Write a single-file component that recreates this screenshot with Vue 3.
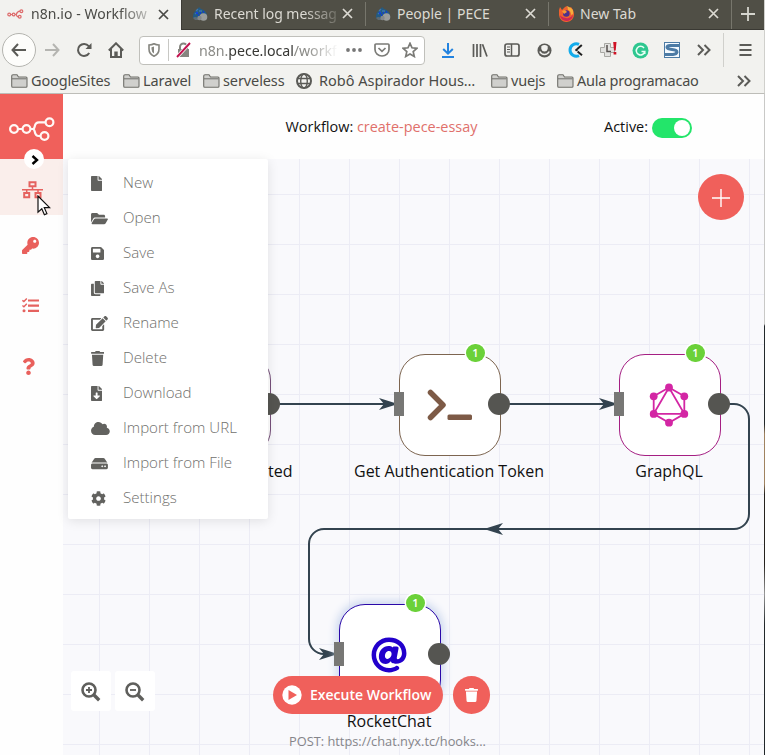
<script setup>
const tabs = [
  { title: 'Recent log messag', icon: 'drupal', cls: 'faded' },
  { title: 'People | PECE', icon: 'drupal', cls: '' },
  { title: 'New Tab', icon: 'fox', cls: '' },
]

const bookmarks = [
  { label: 'GoogleSites', cls: 'b1' },
  { label: 'Laravel', cls: 'b2' },
  { label: 'serveless', cls: 'b3' },
  { label: 'Robô Aspirador Hous…', cls: 'b4', globe: true },
  { label: 'vuejs', cls: 'b5' },
  { label: 'Aula programacao', cls: 'b6' },
]

const trash = 'M432 32H312l-9.4-18.7A24 24 0 0 0 281.1 0H166.8a23.72 23.72 0 0 0-21.4 13.3L136 32H16A16 16 0 0 0 0 48v32a16 16 0 0 0 16 16h416a16 16 0 0 0 16-16V48a16 16 0 0 0-16-16zM53.2 467a48 48 0 0 0 47.9 45h245.8a48 48 0 0 0 47.9-45L416 128H32z'

const menu = [
  { label: 'New', w: 384, d: 'M224 136V0H24C10.7 0 0 10.7 0 24v464c0 13.3 10.7 24 24 24h336c13.3 0 24-10.7 24-24V160H248c-13.2 0-24-10.8-24-24zm160-14.1v6.1H256V0h6.1c6.4 0 12.5 2.5 17 7l97.9 98c4.5 4.5 7 10.6 7 16.9z' },
  { label: 'Open', w: 576, d: 'M572.694 292.093L500.27 416.248A63.997 63.997 0 0 1 444.989 448H45.025c-18.523 0-30.064-20.093-20.731-36.093l72.424-124.155A64 64 0 0 1 152 256h399.964c18.523 0 30.064 20.093 20.73 36.093zM152 224h328v-48c0-26.51-21.49-48-48-48H272l-64-64H48C21.49 64 0 85.49 0 112v278.046l69.077-118.418C86.214 242.25 117.989 224 152 224z' },
  { label: 'Save', w: 448, d: 'M433.941 129.941l-83.882-83.882A48 48 0 0 0 316.118 32H48C21.49 32 0 53.49 0 80v352c0 26.51 21.49 48 48 48h352c26.51 0 48-21.49 48-48V163.882a48 48 0 0 0-14.059-33.941zM224 416c-35.346 0-64-28.654-64-64 0-35.346 28.654-64 64-64s64 28.654 64 64c0 35.346-28.654 64-64 64zm96-304.52V212c0 6.627-5.373 12-12 12H76c-6.627 0-12-5.373-12-12V108c0-6.627 5.373-12 12-12h228.52c3.183 0 6.235 1.264 8.485 3.515l3.48 3.48A11.996 11.996 0 0 1 320 111.48z' },
  { label: 'Save As', w: 448, d: 'M320 448v40c0 13.255-10.745 24-24 24H24c-13.255 0-24-10.745-24-24V120c0-13.255 10.745-24 24-24h72v296c0 30.879 25.121 56 56 56h168zm0-344V0H152c-13.255 0-24 10.745-24 24v368c0 13.255 10.745 24 24 24h272c13.255 0 24-10.745 24-24V128H344c-13.2 0-24-10.8-24-24zm120.971-31.029L375.029 7.029A24 24 0 0 0 358.059 0H352v96h96v-6.059a24 24 0 0 0-7.029-16.97z' },
  { label: 'Rename', w: 576, d: 'M402.6 83.2l90.2 90.2c3.8 3.8 3.8 10 0 13.8L274.4 405.6l-92.8 10.3c-12.4 1.4-22.9-9.1-21.5-21.5l10.3-92.8L388.8 83.2c3.8-3.8 10-3.8 13.8 0zm162-22.9l-48.8-48.8c-15.2-15.2-39.9-15.2-55.2 0l-35.4 35.4c-3.8 3.8-3.8 10 0 13.8l90.2 90.2c3.8 3.8 10 3.8 13.8 0l35.4-35.4c15.2-15.3 15.2-40 0-55.2zM384 346.2V448H64V128h229.8c3.2 0 6.2-1.3 8.5-3.5l40-40c7.6-7.6 2.2-20.5-8.5-20.5H48C21.5 64 0 85.5 0 112v352c0 26.5 21.5 48 48 48h352c26.5 0 48-21.5 48-48V306.2c0-10.7-12.9-16-20.5-8.5l-40 40c-2.2 2.3-3.5 5.3-3.5 8.5z' },
  { label: 'Delete', w: 448, d: trash },
  { label: 'Download', w: 384, d: 'M224 136V0H24C10.7 0 0 10.7 0 24v464c0 13.3 10.7 24 24 24h336c13.3 0 24-10.7 24-24V160H248c-13.2 0-24-10.8-24-24zm76.45 211.36l-96.42 95.7c-6.65 6.61-17.39 6.61-24.04 0l-96.42-95.7C73.42 337.29 80.54 320 94.82 320H160v-80c0-8.84 7.16-16 16-16h32c8.84 0 16 7.16 16 16v80h65.18c14.28 0 21.4 17.29 11.27 27.36zM377 105L279.1 7c-4.5-4.5-10.6-7-17-7H256v128h128v-6.1c0-6.3-2.5-12.4-7-16.9z' },
  { label: 'Import from URL', w: 640, d: 'M537.6 226.6c4.1-10.7 6.4-22.4 6.4-34.6 0-53-43-96-96-96-19.7 0-38.1 6-53.3 16.2C367 64.2 315.3 32 256 32c-88.4 0-160 71.6-160 160 0 2.7.1 5.4.2 8.1C40.2 219.8 0 273.2 0 336c0 79.5 64.5 144 144 144h368c70.7 0 128-57.3 128-128 0-61.9-44-113.6-102.4-125.4z' },
  { label: 'Import from File', w: 576, d: 'M576 304v96c0 26.51-21.49 48-48 48H48c-26.51 0-48-21.49-48-48v-96c0-26.51 21.49-48 48-48h480c26.51 0 48 21.49 48 48zm-48-80a79.557 79.557 0 0 1 30.777 6.165L462.25 85.374A48.003 48.003 0 0 0 422.311 64H153.689a48 48 0 0 0-39.938 21.374L17.223 230.165A79.557 79.557 0 0 1 48 224h480zm-48 96c-17.673 0-32 14.327-32 32s14.327 32 32 32 32-14.327 32-32-14.327-32-32-32zm-96 0c-17.673 0-32 14.327-32 32s14.327 32 32 32 32-14.327 32-32-14.327-32-32-32z' },
  { label: 'Settings', w: 512, d: 'M487.4 315.7l-42.6-24.6c4.3-23.2 4.3-47 0-70.2l42.6-24.6c4.9-2.8 7.1-8.6 5.5-14-11.1-35.6-30-67.8-54.7-94.6-3.8-4.1-10-5.1-14.8-2.3L380.8 110c-17.9-15.4-38.5-27.3-60.8-35.1V25.8c0-5.6-3.9-10.5-9.4-11.7-36.7-8.2-74.3-7.8-109.2 0-5.5 1.2-9.4 6.1-9.4 11.7V75c-22.2 7.9-42.8 19.8-60.8 35.1L88.7 85.5c-4.9-2.8-11-1.9-14.8 2.3-24.7 26.7-43.6 58.9-54.7 94.6-1.7 5.4.6 11.2 5.5 14L67.3 221c-4.3 23.2-4.3 47 0 70.2l-42.6 24.6c-4.9 2.8-7.1 8.6-5.5 14 11.1 35.6 30 67.8 54.7 94.6 3.8 4.1 10 5.1 14.8 2.3l42.6-24.6c17.9 15.4 38.5 27.3 60.8 35.1v49.2c0 5.6 3.9 10.5 9.4 11.7 36.7 8.2 74.3 7.8 109.2 0 5.5-1.2 9.4-6.1 9.4-11.7v-49.2c22.2-7.9 42.8-19.8 60.8-35.1l42.6 24.6c4.9 2.8 11 1.9 14.8-2.3 24.7-26.7 43.6-58.9 54.7-94.6 1.5-5.5-.7-11.3-5.6-14.1zM256 336c-44.1 0-80-35.9-80-80s35.9-80 80-80 80 35.9 80 80-35.9 80-80 80z' },
]

// Node positions are relative to the canvas origin.
const nodes = [
  { id: 'auth', x: 336, y: 195, label: 'Get Authentication Token' },
  { id: 'graphql', x: 556, y: 195, label: 'GraphQL' },
  { id: 'rocket', x: 276, y: 445, label: 'RocketChat', sub: 'POST: https://chat.nyx.tc/hooks...' },
]
</script>

<template>
  <div class="window">
    <header class="chrome">
      <div class="tabs">
        <div class="tab active">
          <svg class="fav" width="17" height="10" viewBox="0 0 17 10" fill="none" stroke="#dd6b6b" stroke-width="1.2">
            <circle cx="2.2" cy="5.5" r="1.4" /><circle cx="6.6" cy="5.5" r="1.4" /><circle cx="14.4" cy="2.2" r="1.4" /><circle cx="12.7" cy="7.8" r="1.4" />
            <path d="M3.6 5.5h1.6M8 5.5h1.2q1.2-3.3 3.8-3.3M9.2 5.5q.7 2.3 2.1 2.3" />
          </svg>
          <span class="title t1">n8n.io - Workflow</span>
          <svg class="close" width="11" height="11" viewBox="0 0 11 11"><path d="M1 1l9 9M10 1l-9 9" /></svg>
        </div>
        <div v-for="t in tabs" :key="t.title" class="tab">
          <svg v-if="t.icon === 'drupal'" class="fav drop" width="16" height="16" viewBox="0 0 16 16">
            <path d="M1 12Q.5 6 5 4l2-3 2 2q5 1 6 6l-2 4H4z" fill="#245b83" />
            <path d="M4 5l2-2M3 8l3-2M7 5h3" stroke="#3c76ae" stroke-width="1.3" />
            <path d="M4 7h2M8 7h1M6 9h1M11 6h1" stroke="#0b33ef" stroke-width="1.6" />
            <path d="M1 12q2-2 5 0l1 2H3z" fill="#5e6b74" />
            <circle cx="11.5" cy="11" r="3.8" fill="#9a9d9c" /><circle cx="7.5" cy="12" r="2.2" fill="#85898a" />
          </svg>
          <svg v-else class="fav" width="17" height="17" viewBox="0 0 17 17">
            <path d="M1 5l1-3 2 3 3-3 2-1 1 3 3-2q3 3 3 7a7.5 7.5 0 0 1-15 1z" fill="#f0612e" />
            <path d="M2 10a6.5 6.5 0 0 0 10 5q3-2 3-5-3 4-7 3-5-1-6-3z" fill="#ce2855" />
            <path d="M9 1l1 4q3 1 3 5l2-1q1-4-2-6-2-1-4-2z" fill="#f7ad3c" />
            <circle cx="8.3" cy="8.5" r="3.3" fill="#4d318c" /><path d="M4 6l3-1 2 2-3 2z" fill="#f79a31" />
          </svg>
          <span class="title" :class="t.cls">{{ t.title }}</span>
          <svg class="close" width="11" height="11" viewBox="0 0 11 11"><path d="M1 1l9 9M10 1l-9 9" /></svg>
        </div>
        <div class="newtab"><svg width="14" height="14" viewBox="0 0 14 14"><path d="M7 0v14M0 7h14" stroke="#d5d5ce" stroke-width="1.8" /></svg></div>
      </div>

      <div class="navbar">
        <div class="back"><svg width="16" height="14" viewBox="0 0 16 14" class="line"><path d="M15 7H1.5M7 1L1.5 7 7 13" /></svg></div>
        <div class="cell"><svg width="16" height="14" viewBox="0 0 16 14" class="line pale"><path d="M1 7h13.5M9 1l5.5 6L9 13" /></svg></div>
        <div class="cell"><svg width="16" height="16" viewBox="0 0 16 16" class="line"><path d="M13.2 11A6 6 0 1 1 12.7 4.2L14.5 6" /><path d="M15.5 1v6h-6z" fill="#5b5b57" stroke="none" /></svg></div>
        <div class="cell"><svg width="16" height="16" viewBox="0 0 16 16" class="line"><path d="M.8 8.5L8 1.3l7.2 7.2M3 7v8h10V7" /><path d="M6.3 9.5h3.4V15H6.3z" fill="#5b5b57" stroke="none" /></svg></div>
        <div class="urlbar">
          <svg width="12" height="14" viewBox="0 0 12 14"><path d="M1 2q3 0 5-1.2Q8 2 11 2v4q0 5-5 7.2Q1 11 1 6z" fill="none" stroke="#85857f" stroke-width="1.6" /><path d="M6 3.5v7Q3.5 9 3.5 6V4.2z" fill="#85857f" /></svg>
          <span class="bar"></span>
          <svg width="15" height="16" viewBox="0 0 15 16"><path d="M4 8V5a3.5 3.5 0 0 1 7 0v3" fill="none" stroke="#85857f" stroke-width="2" /><path d="M2 7h11v8H2z" fill="#85857f" /><path d="M14 1L1 15" stroke="#fff" stroke-width="3.5" /><path d="M14 1L1 15" stroke="#c2124f" stroke-width="1.9" /></svg>
          <span class="url">n8n.<b>pece.local</b>/workf</span>
          <svg width="16" height="4" viewBox="0 0 16 4" fill="#777"><circle cx="2" cy="2" r="1.9" /><circle cx="8" cy="2" r="1.9" /><circle cx="14" cy="2" r="1.9" /></svg>
          <svg width="16" height="14" viewBox="0 0 16 14" class="line gray pocket"><path d="M2 1h12q1 0 1 1v4.5a7 6.5 0 0 1-14 0V2q0-1 1-1zM4.5 5L8 8.3 11.5 5" /></svg>
          <svg width="16" height="16" viewBox="0 0 16 16" class="line gray"><path d="M8 1.3l2 4.5 4.9.5-3.7 3.3 1.1 4.9L8 12l-4.3 2.5 1.1-4.900L1.100 6.300 6 5.800z" /></svg>
        </div>
        <div class="cell"><svg width="14" height="16" viewBox="0 0 14 16" class="line blue"><path d="M7 1v10.5M2.2 7L7 11.7 11.8 7M1 15h12" /></svg></div>
        <div class="cell"><svg width="16" height="14" viewBox="0 0 16 14" class="line"><path d="M1.5 1v13M5 1v13M8.5 1v13M10.5 1.2L15 13.5" stroke-width="1.7" /></svg></div>
        <div class="cell"><svg width="16" height="14" viewBox="0 0 16 14" class="line"><rect x="1" y="1" width="14" height="12" rx="2" stroke-width="1.7" /><path d="M7.5 1v12" stroke-width="1.5" /><path d="M3 4h3M3 6.5h3M3 9h3" stroke-width="1" /></svg></div>
        <div class="cell"><svg width="15" height="15" viewBox="0 0 15 15"><circle cx="7.5" cy="7.5" r="7" fill="#5b5b57" /><path d="M4.300 3.300q3.200-2.500 6.400 0v2.700q-.7 2.500-3.200 2.500t-3.200-2.500z" fill="#f2f2ef" /><path d="M2.800 8.500q1.500 3 4.700 3t4.700-3" fill="none" stroke="#f2f2ef" stroke-width="1.5" /></svg></div>
        <div class="cell"><svg width="16" height="16" viewBox="0 0 16 16" fill="none"><path d="M11 2.3A6.3 6.3 0 1 0 11 13.7" stroke="#14aceb" stroke-width="3" /><path d="M13.8 3L9 7.3M9.6 9.6L14 13.3" stroke="#202020" stroke-width="2" /><circle cx="8.5" cy="8" r="1.3" fill="#222" /></svg></div>
        <div class="cell"><svg width="18" height="16" viewBox="0 0 18 16" fill="none"><path d="M5.5 1.5h6v4h4v5h-4v4h-6v-4h-4v-5h4z" fill="#e2e2df" stroke="#a8a8a3" /><path d="M8 3v6.5h4" stroke="#55504e" stroke-width="1.5" /><path d="M14.2 0h3.3l-.8 8.5h-1.7zM14.6 10h2.7v2.5h-2.7z" fill="#d01325" /></svg></div>
        <div class="cell"><svg width="17" height="17" viewBox="0 0 17 17" fill="none"><circle cx="8.5" cy="8.5" r="8" fill="#2ec78f" /><path d="M12 6A4.3 4.3 0 1 0 12.8 9.5H9.5M12.8 9.5V12" stroke="#e7fff5" stroke-width="1.5" /></svg></div>
        <div class="cell"><svg width="16" height="16" viewBox="0 0 16 16" fill="none"><rect x=".5" y=".5" width="15" height="15" fill="#f4faff" stroke="#4c7ba5" /><path d="M15 3.5H6Q2.8 3.7 3 5.5 3.5 7 8 7.5q5 .5 5 2.7-.5 2-4 2.3H1" stroke="#4c7ba5" stroke-width="3" /></svg></div>
        <div class="cell"><svg width="14" height="12" viewBox="0 0 14 12" class="line"><path d="M1 1l5 5-5 5M7.5 1l5 5-5 5" /></svg></div>
        <span class="navsep"></span>
        <div class="cell"><svg width="13" height="12" viewBox="0 0 13 12" class="line"><path d="M.5 1h12M.5 6h12M.5 11h12" /></svg></div>
      </div>

      <div class="bookmarks">
        <div v-for="b in bookmarks" :key="b.label" class="bm" :class="b.cls">
          <svg v-if="b.globe" width="16" height="16" viewBox="0 0 16 16" class="line"><circle cx="8" cy="8" r="7" /><ellipse cx="8" cy="8" rx="3.3" ry="7" stroke-width="1.4" /><path d="M1.5 5.5h13M1.5 10.5h13" stroke-width="1.4" /></svg>
          <svg v-else width="17" height="14" viewBox="0 0 17 14"><path d="M.7 12V2q0-1.3 1.3-1.3h4L7.5 3H15q1 0 1 1v8.3q0 1-1 1H1.7q-1 0-1-1.3z" fill="#d0d0cd" stroke="#70706b" stroke-width="1.1" /><path d="M1 4.8h14.5" stroke="#70706b" /></svg>
          <span>{{ b.label }}</span>
        </div>
        <svg class="line" width="14" height="12" viewBox="0 0 14 12"><path d="M1 1l5 5-5 5M7.5 1l5 5-5 5" /></svg>
      </div>
    </header>

    <div class="app">
      <aside class="sidebar">
        <div class="logo">
          <svg width="46" height="24" viewBox="0 0 46 24" fill="none" stroke="#fff8f6" stroke-width="2.2">
            <circle cx="5" cy="12" r="3.9" /><circle cx="17.5" cy="12" r="3.9" /><circle cx="40.5" cy="5.3" r="3.9" /><circle cx="35.5" cy="19" r="3.9" />
            <path d="M9 12h4.5M21.5 12h2.2q1.5 0 2-2.500.8-4.200 4.300-4.200h6.500M23.700 12q1.500 0 2 2.500.8 4.500 4 4.500h1.800" />
          </svg>
          <span class="expand"><svg width="8" height="10" viewBox="0 0 8 10"><path d="M1.5 1L6 5 1.5 9" fill="none" stroke="#000" stroke-width="2.4" /></svg></span>
        </div>
        <div class="side on">
          <svg width="21" height="18" viewBox="0 0 21 18" fill="none" stroke="#e5625f" stroke-width="2">
            <path d="M7.5 1.2h6v4h-6zM2.2 12h5v4.3h-5zM13.5 12h5v4.3h-5z" /><path d="M0 8.7h21M10.5 5v3.7M4.7 8.7V12M16 8.7V12" stroke-width="1.5" />
          </svg>
        </div>
        <div class="side s2"><svg width="17" height="17" viewBox="0 0 512 512" fill="#e9605c"><path d="M512 176.001C512 273.203 433.202 352 336 352c-11.22 0-22.19-1.062-32.827-3.069l-24.012 27.014A23.999 23.999 0 0 1 261.223 384H224v40c0 13.255-10.745 24-24 24h-40v40c0 13.255-10.745 24-24 24H24c-13.255 0-24-10.745-24-24v-78.059c0-6.365 2.529-12.47 7.029-16.971l161.802-161.802C163.108 213.814 160 195.271 160 176 160 78.798 238.797.001 335.999 0 433.488-.001 512 78.511 512 176.001zM336 128c0 26.51 21.49 48 48 48s48-21.49 48-48-21.49-48-48-48-48 21.49-48 48z" /></svg></div>
        <div class="side s3">
          <svg width="17" height="15" viewBox="0 0 17 15" fill="none" stroke="#e5625f" stroke-width="2.2"><path d="M6 2.5h11M6 7.7h11M6 12.8h11" /><path d="M.4 2.3l1.5 1.3L4.8.5M.4 7.5l1.500 1.300 2.900-3.100" stroke-width="1.4" /><circle cx="2" cy="12.8" r="1.5" fill="#e5625f" stroke="none" /></svg>
        </div>
        <div class="side s4"><svg width="13" height="17" viewBox="0 0 384 512" fill="#e9605c"><path d="M202.021 0C122.202 0 70.503 32.703 29.914 91.026c-7.363 10.58-5.093 25.086 5.178 32.874l43.138 32.709c10.373 7.865 25.132 6.026 33.253-4.148 25.049-31.381 43.63-49.449 82.757-49.449 30.764 0 68.816 19.799 68.816 49.631 0 22.552-18.617 34.134-48.993 51.164-35.423 19.86-82.299 44.576-82.299 106.405V320c0 13.255 10.745 24 24 24h72.471c13.255 0 24-10.745 24-24v-5.773c0-42.86 125.268-44.645 125.268-160.627C377.504 66.256 286.902 0 202.021 0zM192 373.459c-38.196 0-69.271 31.075-69.271 69.271 0 38.195 31.075 69.27 69.271 69.27s69.271-31.075 69.271-69.271-31.075-69.27-69.271-69.27z" /></svg></div>
      </aside>

      <main class="main">
        <div class="topbar">
          <div class="wf">Workflow: <span>create-pece-essay</span></div>
          <div class="act">Active: <span class="switch"><i></i></span></div>
        </div>

        <div class="canvas">
          <svg class="wires" width="702" height="596" viewBox="63 159 702 596" fill="none" stroke="#33434f" stroke-width="2">
            <path d="M269 404h125M499 404h115M719 404h15a15 15 0 0 1 15 15v95a15 15 0 0 1-15 15H324a15 15 0 0 0-15 15v95a15 15 0 0 0 15 15h12" />
            <path class="head" d="M398 404l-19-6 5 6-5 6zM618 404l-19-6 5 6-5 6zM338 654l-19-6 5 6-5 6zM484 529l19-6-5 6 5 6z" />
          </svg>

          <div class="node trigger"><div class="box"></div><span class="out"></span><div class="label">ted</div></div>

          <div v-for="n in nodes" :key="n.id" class="node" :class="n.id" :style="{ left: n.x + 'px', top: n.y + 'px' }">
            <div class="box">
              <svg v-if="n.id === 'auth'" width="46" height="32" viewBox="0 0 46 32" fill="none" stroke="#7d5a46" stroke-linecap="round"><path d="M3.5 3.5L16 16 3.5 28.5" stroke-width="5.5" stroke-linejoin="round" /><rect x="20.5" y="25.5" width="24.5" height="5.5" rx="1.5" fill="#7d5a46" stroke="none" /></svg>
              <svg v-else-if="n.id === 'graphql'" width="40" height="44" viewBox="0 0 40 44" fill="none" stroke="#d326a4" stroke-width="1.8">
                <path d="M20 4.5l15.3 8.8v17.6L20 39.7 4.7 30.9V13.3zM20 4.5L4.7 30.9h30.6z" />
                <g fill="#d326a4" stroke="none"><circle cx="20" cy="4.5" r="3.9" /><circle cx="35.3" cy="13.3" r="3.9" /><circle cx="35.3" cy="30.9" r="3.9" /><circle cx="20" cy="39.7" r="3.9" /><circle cx="4.7" cy="30.9" r="3.9" /><circle cx="4.7" cy="13.3" r="3.9" /></g>
              </svg>
              <svg v-else width="36" height="36" viewBox="0 0 512 512" fill="#2200cc"><path d="M256 8C118.941 8 8 118.919 8 256c0 137.059 110.919 248 248 248 48.154 0 95.342-14.14 135.408-40.223 12.005-7.815 14.625-24.288 5.552-35.372l-10.177-12.433c-7.671-9.371-21.179-11.667-31.373-5.129C325.92 429.757 291.314 440 256 440c-101.458 0-184-82.542-184-184S154.542 72 256 72c100.139 0 184 57.619 184 160 0 38.786-21.093 79.742-58.17 83.693-17.349-.454-16.91-12.857-13.476-30.024l23.433-121.11C394.653 149.75 383.308 136 368.225 136h-44.981a13.518 13.518 0 0 0-13.432 11.993l-.01.092c-14.697-17.901-40.448-21.775-59.971-21.775-74.58 0-137.831 62.234-137.831 151.46 0 65.303 36.785 105.87 96 105.87 26.984 0 57.369-15.637 74.991-38.333 9.522 34.104 40.613 34.104 70.71 34.104C462.609 379.41 504 307.798 504 232 504 95.653 394.023 8 256 8zm-21.68 304.43c-22.249 0-36.07-15.623-36.07-40.771 0-44.993 30.779-72.729 58.63-72.729 22.292 0 35.601 15.241 35.601 40.77 0 45.061-33.875 72.73-58.161 72.73z" /></svg>
            </div>
            <span class="in"></span><span class="out"></span>
            <span class="badge">1</span>
            <div class="label">{{ n.label }}</div>
            <div v-if="n.sub" class="sub">{{ n.sub }}</div>
          </div>

          <div class="add"><svg width="18" height="18" viewBox="0 0 18 18"><path d="M9 0v18M0 9h18" stroke="#fff" stroke-width="1.4" /></svg></div>

          <div class="zoom">
            <div v-for="z in ['M8 5v6M5 8h6', 'M5 8h6']" :key="z" class="zb">
              <svg width="20" height="20" viewBox="0 0 20 20" fill="none" stroke="#5f5f5c"><circle cx="8" cy="8" r="6.5" stroke-width="2.6" /><path d="M13 13l5.2 5.2" stroke-width="3.4" /><path :d="z" stroke-width="1.8" /></svg>
            </div>
          </div>

          <div class="run">
            <button class="exec">
              <svg width="20" height="20" viewBox="0 0 20 20"><circle cx="10" cy="10" r="9.7" fill="#fff" /><path d="M6.5 5l8.5 5-8.5 5z" fill="#f0605b" /></svg>
              <span>Execute Workflow</span>
            </button>
            <button class="del"><svg width="13" height="14" viewBox="0 0 448 512" preserveAspectRatio="none" fill="#fff"><path :d="trash" /></svg></button>
          </div>
        </div>
      </main>

      <div class="menu">
        <div v-for="m in menu" :key="m.label" class="item">
          <span class="ic"><svg :width="m.w / 34" height="15" :viewBox="`0 0 ${m.w} 512`" fill="#62625f"><path :d="m.d" /></svg></span>
          <span class="name">{{ m.label }}</span>
        </div>
      </div>

      <svg class="cursor" width="14" height="21" viewBox="0 0 14 21"><path d="M1 1v16.2l3.800-3.500 2.600 6 2.500-1.100-2.600-5.900h5.300z" fill="#fff" stroke="#111" stroke-width="1.2" /></svg>
      <span class="edge"></span>
    </div>
  </div>
</template>

<style>
body { margin: 0; overflow: hidden; }
</style>

<style scoped>
* { box-sizing: border-box; }
.window { position: relative; width: 765px; height: 755px; overflow: hidden; background: #fefefe; font-family: "Open Sans", "Noto Sans", sans-serif; display: flex; flex-direction: column; }
svg { display: block; flex: none; }
.chrome { height: 94px; flex: none; background: #f2f2ef; border-bottom: 1px solid #bdbdb8; font-family: "Noto Sans", sans-serif; font-size: 14.5px; color: #4a4a46; white-space: nowrap; border-right: 1px solid #d0d0cc; }
.tabs { height: 30px; display: flex; background: #504f46; border-bottom: 1px solid #3a3933; font-size: 14px; }
.tab { width: 183px; padding: 0 12px 2px 10px; display: flex; align-items: center; position: relative; color: #dcdad3; }
.tab.active { width: 182px; height: 30px; background: #f2f2ef; color: #4a4a46; padding-left: 7px; padding-right: 12px; border-right: 1px solid #3c3b35; }
.tab + .tab + .tab::before { content: ""; width: 1px; height: 24px; background: #77766c; position: absolute; left: 0; top: 2px; }
.fav { margin-right: 5px; }
.drop { margin-right: 6px; }
.tab.active .fav { margin-right: 7px; }
.title { flex: 1; min-width: 0; padding-bottom: 1px; }
.t1 { letter-spacing: .05px; mask-image: linear-gradient(90deg, #000 88px, transparent 130px); }
.faded { letter-spacing: -.05px; mask-image: linear-gradient(90deg, #000 90px, transparent 132px); }
.close path { stroke: currentColor; stroke-width: 1.7; fill: none; }
.newtab { width: 33px; padding-bottom: 2px; display: flex; align-items: center; justify-content: center; border-left: 1px solid #77766c; }
.navbar { height: 40px; display: flex; align-items: center; padding-left: 2px; }
.line { fill: none; stroke: #5b5b57; stroke-width: 2; }
.pale { stroke: #b5b5b1; }
.gray { stroke: #7b7b77; stroke-width: 1.7; }
.blue { stroke: #2383df; }
.back { width: 34px; height: 34px; border: 1px solid #b4b4af; border-radius: 50%; background: #fdfdfb; display: flex; align-items: center; justify-content: center; flex: none; }
.cell { width: 32px; flex: none; display: flex; justify-content: center; }
.urlbar { width: 286px; height: 29px; margin: 0 7px; border: 1px solid #c0c0bb; border-radius: 4px; background: #fff; display: flex; align-items: center; padding: 0 6px 0 8px; flex: none; }
.bar { width: 1px; height: 22px; background: #c8c8c4; margin: 0 7px 0 8px; }
.url { width: 138px; margin: 0 9px 0 8px; font-size: 14.2px; letter-spacing: -.05px; color: #8b8b87; mask-image: linear-gradient(90deg, #000 108px, transparent 139px); }
.url b { font-weight: 400; color: #383835; }
.pocket { margin: 0 12px; }
.navsep { width: 1px; height: 34px; background: #d0d0cc; margin: 0 5px 0 3px; }
.bookmarks { height: 21px; display: flex; align-items: center; padding-left: 11px; }
.bm { display: flex; align-items: center; gap: 3px; flex: none; }
.bm span { padding-bottom: 2px; }
.b1 { width: 112px; letter-spacing: -.15px; } .b2 { width: 80px; letter-spacing: -.1px; } .b3 { width: 93px; letter-spacing: -.1px; } .b4 { width: 195px; gap: 7px; } .b5 { width: 66px; letter-spacing: -.2px; } .b6 { width: 180px; letter-spacing: -.25px; }
.app { position: relative; flex: 1; display: flex; min-height: 0; }
.sidebar { width: 63px; background: #fefefe; flex: none; display: flex; flex-direction: column; }
.logo { position: relative; height: 65px; background: #f0605b; padding: 23px 0 0 9px; }
.expand { position: absolute; left: 24px; top: 55px; width: 20px; height: 20px; border-radius: 50%; background: #fff; display: flex; align-items: center; justify-content: center; z-index: 3; padding-left: 2px; padding-top: 1px; }
.side { height: 60px; display: flex; align-items: center; padding-left: 22px; }
.side.on { height: 56px; background: #faeeeb; align-items: flex-start; padding-top: 22px; }
.side.s2 { height: 61px; }
.side.s3 { padding-bottom: 2px; }
.main { flex: 1; min-width: 0; display: flex; flex-direction: column; }
.topbar { height: 65px; flex: none; display: flex; padding: 0 73px 0 222.5px; justify-content: space-between; align-items: center; font-size: 14.45px; color: #111; background: #fefefe; }
.wf span { color: #e0706b; }
.act { display: flex; align-items: center; gap: 4px; }
.switch { width: 40px; height: 20px; border-radius: 10px; background: #23e56a; display: flex; justify-content: flex-end; padding: 2px; margin-top: 3px; }
.switch i { width: 16px; height: 16px; border-radius: 50%; background: #fff; }
.canvas { position: relative; flex: 1; overflow: hidden; background-color: #f9f9fc; background-image: linear-gradient(90deg, #ececf5 1px, transparent 1px), linear-gradient(#ececf5 1px, transparent 1px); background-size: 50px 50px; background-position: 36px 35px; }
.wires { position: absolute; left: 0; top: 0; }
.head { fill: #33434f; stroke: none; }
.node { position: absolute; width: 102px; height: 102px; }
.trigger { left: 106px; top: 195px; }
.box { width: 102px; height: 102px; border: 1px solid #7d6550; border-radius: 26px; background: #fff; display: flex; align-items: center; justify-content: center; }
.trigger .box { border-color: #76507a; }
.graphql .box { border-color: #a51f83; }
.rocket .box { border: 1.5px solid #2a08a8; box-shadow: 0 0 8px 3px #cbd7ee; }
.graphql .box svg, .rocket .box svg { margin-right: 2px; }
.in, .out, .badge, .label, .sub { position: absolute; }
.in { left: -5px; top: 38px; width: 10px; height: 24px; background: #777775; }
.out { left: 89px; top: 39px; width: 22px; height: 22px; border-radius: 50%; background: #555551; }
.badge { left: 67px; top: -10px; width: 19px; height: 18px; border-radius: 9px; background: #6bd139; box-shadow: 0 0 0 1.5px #fff; color: #fff; font-size: 11px; line-height: 18px; font-weight: 600; text-align: center; }
.label { left: -60px; width: 220px; top: 106px; text-align: center; font-size: 16px; line-height: 22px; color: #111; white-space: nowrap; }
.trigger .label { left: 99px; width: 24px; text-align: right; }
.sub { left: -60px; width: 217px; top: 128px; text-align: center; font-size: 12.8px; line-height: 18px; color: #85858a; white-space: nowrap; }
.add { position: absolute; left: 635px; top: 15px; width: 46px; height: 46px; border-radius: 50%; background: #f0605b; display: flex; align-items: center; justify-content: center; padding-top: 2px; padding-right: 1px; }
.zoom { position: absolute; left: 8px; top: 512px; display: flex; gap: 4px; }
.zb { width: 40px; height: 40px; background: #fff; border-radius: 3px; display: flex; align-items: center; justify-content: center; padding-top: 1px; }
.run { position: absolute; left: 210px; top: 517px; display: flex; gap: 10px; }
button { border: 0; background: #f0605b; color: #fff; font: 600 14px "Open Sans", sans-serif; padding: 0 0 1px; display: flex; align-items: center; }
.exec { width: 170px; height: 38px; border-radius: 19px; padding-left: 9px; gap: 8px; white-space: nowrap; }
.del { width: 37px; height: 38px; border-radius: 19px; justify-content: center; }
.menu { position: absolute; left: 68px; top: 65px; width: 200px; height: 360px; padding-top: 6px; background: #fff; border-radius: 2px; box-shadow: 0 2px 12px rgba(0, 0, 0, .1); }
.item { height: 35px; display: flex; align-items: center; padding-left: 23px; font-size: 15.1px; font-weight: 300; color: #70706d; white-space: nowrap; }
.ic { width: 32px; padding-top: 1px; }
.name { padding-bottom: 2px; }
.cursor { position: absolute; left: 37px; top: 101px; z-index: 4; }
.edge { position: absolute; right: 0; top: 0; width: 1px; height: 661px; background: linear-gradient(#c9c9c7 0 230px, #22282a 232px 330px, #a08360 340px 390px, #25221d 400px 470px, #999 500px, #22282a 530px); }
</style>
